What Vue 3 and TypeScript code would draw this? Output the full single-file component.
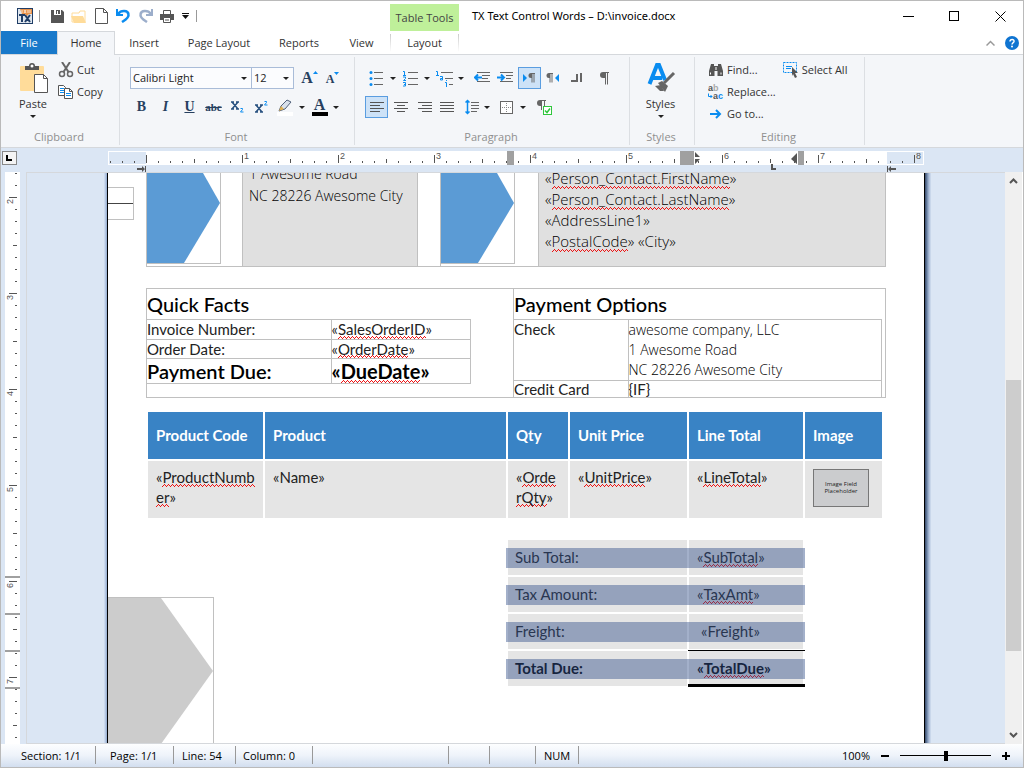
<script setup lang="ts">
import { ref } from 'vue'

interface Tick {
  pos: number
  kind: 'inch' | 'half' | 'eighth'
  label: string
}

const STEP = 12

function makeTicks(origin: number, from: number, to: number): Tick[] {
  const ticks: Tick[] = []
  for (let i = from; i <= to; i++) {
    const inch = i % 8 === 0
    ticks.push({
      pos: origin + i * STEP,
      kind: inch ? 'inch' : i % 4 === 0 ? 'half' : 'eighth',
      label: inch && i > 0 ? String(i / 8) : '',
    })
  }
  return ticks
}

const hTicks = makeTicks(38, -3, 64)
const vTicks = makeTicks(-167, 14, 61)
const rowMarks = [404, 441, 478, 515]

const tabs = [
  { name: 'File', cls: 'file' },
  { name: 'Home', cls: 'home' },
  { name: 'Insert', cls: 'insert' },
  { name: 'Page Layout', cls: 'pagelayout' },
  { name: 'Reports', cls: 'reports' },
  { name: 'View', cls: 'view' },
  { name: 'Layout', cls: 'layout' },
]

const columns = ['Product Code', 'Product', 'Qty', 'Unit Price', 'Line Total', 'Image']

const totals = [
  { label: 'Sub Total:', field: 'SubTotal', checked: true },
  { label: 'Tax Amount:', field: 'TaxAmt', checked: true },
  { label: 'Freight:', field: 'Freight', checked: false },
  { label: 'Total Due:', field: 'TotalDue', checked: true },
]

const font = ref('Calibri Light')
const size = ref('12')
const zoom = ref(100)
</script>

<template>
  <div class="window">
    <header class="titlebar">
      <div class="qat">
        <svg class="logo" width="16" height="16" viewBox="0 0 16 16">
          <rect width="16" height="16" fill="#1f3d66" />
          <rect x="1" y="1" width="14" height="14" fill="#dfe6ee" />
          <path d="M3 1h12v5h-3l-2 2-2-2H5z" fill="#e8924a" />
          <path d="M5 2v3M7 2l2 3M9 2l-2 3M11 2v3M13 2v3" stroke="#fbe3cc" />
          <path d="M2 7h6M5 7v7M8 7l5 7M13 7l-5 7" stroke="#1f3d66" stroke-width="2" fill="none" />
        </svg>
        <i class="bar"></i>
        <button class="q" aria-label="Save">
          <svg width="13" height="13" viewBox="0 0 13 13"><path d="M0 0h3v5h7V0h1l2 2v11H0z" fill="#555" /><path d="M5 0h4v4H7V1H6v3H5z" fill="#555" /></svg>
        </button>
        <button class="q" aria-label="Open">
          <svg width="16" height="13" viewBox="0 0 16 13"><path d="M1 12V3h7l1-2h5v11z" fill="#fff" stroke="#ffdc9a" /><path d="M0 6h12l3 7H3z" fill="#ffdc9a" /></svg>
        </button>
        <button class="q" aria-label="New">
          <svg width="13" height="16" viewBox="0 0 13 16"><path d="M.5.5h8l4 4v11H.5z" fill="#fff" stroke="#555" /><path d="M8.500.5v4h4" fill="none" stroke="#555" /></svg>
        </button>
        <button class="q" aria-label="Undo">
          <svg width="15" height="14" viewBox="0 0 15 14"><path d="M1 0v6h6" fill="none" stroke="#0a8cf0" stroke-width="2" /><path d="M2 5C5 1 12 1 12.500 5.500C13 9 9 11 6 13" fill="none" stroke="#0a8cf0" stroke-width="2.500" /></svg>
        </button>
        <button class="q" aria-label="Redo">
          <svg width="15" height="14" viewBox="0 0 15 14"><path d="M14 0v6H8" fill="none" stroke="#9caecb" stroke-width="2" /><path d="M13 5C10 1 3 1 2.500 5.500C2 9 6 11 9 13" fill="none" stroke="#9caecb" stroke-width="2.500" /></svg>
        </button>
        <button class="q" aria-label="Print">
          <svg width="14" height="13" viewBox="0 0 14 13"><path d="M3.500 4V.5h7V4" fill="#fff" stroke="#555" /><path d="M0 4h14v6H0z" fill="#555" /><path d="M3.500 7.500h7v5h-7z" fill="#fff" stroke="#555" /><path d="M5 10h4" stroke="#555" /></svg>
        </button>
        <button class="q small" aria-label="Customize">
          <svg width="7" height="6" viewBox="0 0 7 6"><path d="M0 0h7v1H0zM0 2h7L3.500 6z" fill="#111" /></svg>
        </button>
        <i class="bar"></i>
      </div>
      <div class="context">Table Tools</div>
      <h1 class="title">TX Text Control Words – D:\invoice.docx</h1>
      <div class="winbtns">
        <button aria-label="Minimize"><svg width="11" height="11"><path d="M0 5.500h11" stroke="#000" /></svg></button>
        <button aria-label="Maximize"><svg width="11" height="11"><rect x=".5" y=".5" width="9" height="9" fill="none" stroke="#000" /></svg></button>
        <button aria-label="Close"><svg width="11" height="11"><path d="M.5.5l10 10M10.500.5l-10 10" stroke="#000" /></svg></button>
      </div>
    </header>

    <nav class="tabs">
      <button v-for="t in tabs" :key="t.name" class="tab" :class="t.cls">{{ t.name }}</button>
      <span class="tabfill"></span>
      <button class="mini" aria-label="Collapse ribbon"><svg width="9" height="6"><path d="M.5 5.500l4-4 4 4" fill="none" stroke="#999" stroke-width="1.500" /></svg></button>
      <button class="mini" aria-label="Help">
        <svg width="14" height="14" viewBox="0 0 14 14"><circle cx="7" cy="7" r="7" fill="#0f74d1" /><path d="M5 5.500c0-3 4.500-2.500 4 0C8.700 6.700 7 7 7 8.500" fill="none" stroke="#fff" stroke-width="1.500" /><circle cx="7" cy="10.500" r="1" fill="#fff" /></svg>
      </button>
    </nav>

    <section class="ribbon">
      <div class="group clipboard">
        <div class="body">
          <button class="big">
            <svg width="30" height="32" viewBox="0 0 30 32">
              <rect x="2" y="4" width="24" height="25" rx="1" fill="#ffdc9a" />
              <path d="M7 8V4h4a3 3 0 0 1 6 0h4v4z" fill="#555" /><circle cx="14" cy="4" r="1.500" fill="#fff" />
              <path d="M16.500 12.500h9l4 4v14h-13z" fill="#fff" stroke="#555" /><path d="M25.500 12.500v4h4" fill="none" stroke="#555" />
            </svg>
            <span>Paste</span>
            <i class="caret"></i>
          </button>
          <div class="stack">
            <button class="item">
              <svg width="16" height="16" viewBox="0 0 16 16"><path d="M4 0l6.500 10M12 0L5.500 10" stroke="#666" stroke-width="2" /><circle cx="4" cy="12" r="2.500" fill="none" stroke="#666" stroke-width="1.500" /><circle cx="12" cy="12" r="2.500" fill="none" stroke="#666" stroke-width="1.500" /></svg>
              Cut
            </button>
            <button class="item">
              <svg width="16" height="16" viewBox="0 0 16 16"><path d="M.5 1.500h5l2 2v8h-7z" fill="#fff" stroke="#555" /><path d="M2 4.500h4M2 6.500h4M2 8.500h4" stroke="#0a8cf0" /><path d="M6.500 4.500h5l3 3v7h-8z" fill="#fff" stroke="#555" /><path d="M11.500 4.500v3h3" fill="none" stroke="#555" /><path d="M8 9.500h5M8 11.500h5" stroke="#0a8cf0" /></svg>
              Copy
            </button>
          </div>
        </div>
        <div class="caption">Clipboard</div>
      </div>

      <div class="group fontgroup">
        <div class="body rows">
          <div class="row">
            <label class="combo family"><select v-model="font" aria-label="Font"><option>Calibri Light</option></select><i class="caret"></i></label>
            <label class="combo size"><select v-model="size" aria-label="Font size"><option>12</option></select><i class="caret"></i></label>
            <button class="tool after" aria-label="Grow font"><span class="glyph a1">A</span><svg width="5" height="14"><path d="M0 3h5L2.500 0z" fill="#0a8cf0" /></svg></button>
            <button class="tool" aria-label="Shrink font"><span class="glyph a2">A</span><svg width="5" height="14"><path d="M0 1h5L2.500 4z" fill="#0a8cf0" /></svg></button>
          </div>
          <div class="row gap">
            <button class="tool glyph b">B</button>
            <button class="tool glyph i">I</button>
            <button class="tool glyph u">U</button>
            <button class="tool glyph s">abc</button>
            <button class="tool" aria-label="Subscript"><svg width="14" height="14" viewBox="0 0 14 14"><path d="M1 2l6 7M7 2L1 9M0 2h3M5 2h3M0 9h3M5 9h3" fill="none" stroke="#27507f" stroke-width="1.500" /><path d="M9.500 8.500h2v1l-2 2.500h3" fill="none" stroke="#0a8cf0" /></svg></button>
            <button class="tool" aria-label="Superscript"><svg width="14" height="14" viewBox="0 0 14 14"><path d="M1 5l6 7M7 5L1 12M0 5h3M5 5h3M0 12h3M5 12h3" fill="none" stroke="#27507f" stroke-width="1.500" /><path d="M9.500 1.500h2v1l-2 2.500h3" fill="none" stroke="#0a8cf0" /></svg></button>
            <span class="split">
              <button class="tool" aria-label="Highlight"><svg width="17" height="17" viewBox="0 0 17 17"><path d="M0 13h16v4H0z" fill="#fff" /><path d="M2 12l2-5 6-6 4 2-6 7z" fill="#d8e0ea" stroke="#50607a" /><path d="M2 12l2-5 3 3z" fill="#e0b050" /></svg></button>
              <button class="drop" aria-label="Highlight colors"><i class="caret"></i></button>
            </span>
            <span class="split">
              <button class="tool stacked" aria-label="Font color"><span class="glyph ac">A</span><i class="inkbar"></i></button>
              <button class="drop" aria-label="Font colors"><i class="caret"></i></button>
            </span>
          </div>
        </div>
        <div class="caption">Font</div>
      </div>

      <div class="group paragraph">
        <div class="body rows">
          <div class="row gap">
            <span class="split">
              <button class="tool" aria-label="Bullets"><svg width="15" height="16" viewBox="0 0 15 16"><path d="M5 2.500h9M5 8.500h9M5 14.500h9" stroke="#666" /><g fill="#0a8cf0"><circle cx="2" cy="2.500" r="1.500" /><circle cx="2" cy="8.500" r="1.500" /><circle cx="2" cy="14.500" r="1.500" /></g></svg></button>
              <button class="drop" aria-label="Bullet styles"><i class="caret"></i></button>
            </span>
            <span class="split">
              <button class="tool" aria-label="Numbering"><svg width="15" height="17" viewBox="0 0 15 17"><path d="M5 2.500h10M5 8.500h10M5 14.500h10" stroke="#666" /><path d="M0 1.500h1.500V5M0 5.500h3M0 7h2.500v1.500L.5 10.500H3M0 12.500h2.500v3.500H0M1 14.500h1" fill="none" stroke="#0a8cf0" /></svg></button>
              <button class="drop" aria-label="Number styles"><i class="caret"></i></button>
            </span>
            <span class="split">
              <button class="tool" aria-label="Multilevel list"><svg width="17" height="17" viewBox="0 0 17 17"><path d="M5 2.500h12M9 8.500h8M13 14.500h4" stroke="#666" /><path d="M0 1.500h1.500V5M0 5.500h3M4 6.500h2.500V10H4.500V8.500H6M9 12.500h1.500V17M10 10.500h1" fill="none" stroke="#0a8cf0" /></svg></button>
              <button class="drop" aria-label="Multilevel styles"><i class="caret"></i></button>
            </span>
            <button class="tool space" aria-label="Decrease indent"><svg width="17" height="12" viewBox="0 0 17 12"><path d="M3 .5h13M8 3.500h8M8 6.500h6M3 9.500h13" stroke="#666" /><path d="M1 5.500h7M4 2.500l-3 3 3 3" fill="none" stroke="#0a8cf0" stroke-width="2" /></svg></button>
            <button class="tool slim" aria-label="Increase indent"><svg width="17" height="12" viewBox="0 0 17 12"><path d="M3 .5h13M9 3.500h7M9 6.500h5M3 9.500h13" stroke="#666" /><path d="M0 5.500h7M4 2.500l3 3-3 3" fill="none" stroke="#0a8cf0" stroke-width="2" /></svg></button>
            <button class="tool on near" aria-label="Left to right"><svg width="13" height="10" viewBox="0 0 13 10"><path d="M0 1v8l4-4z" fill="#0a8cf0" /><path d="M12 .5H8M9 1v8.500M11 1v8.500" fill="none" stroke="#666" /><path d="M9 0H8a2 2 0 0 0 0 5h1z" fill="#666" /></svg></button>
            <button class="tool slim" aria-label="Right to left"><svg width="13" height="10" viewBox="0 0 13 10"><path d="M13 1v8L9 5z" fill="#0a8cf0" /><path d="M7 .5H3M4 1v8.500M6 1v8.500" fill="none" stroke="#666" /><path d="M4 0H3a2 2 0 0 0 0 5h1z" fill="#666" /></svg></button>
            <button class="tool near" aria-label="Tabs"><svg width="12" height="10" viewBox="0 0 12 10"><path d="M0 8h7M6 1v8M10 0v9" fill="none" stroke="#666" stroke-width="2" /></svg></button>
            <button class="tool space" aria-label="Show marks"><svg width="11" height="13" viewBox="0 0 11 13"><path d="M10 .5H4M6.500 0v12.500M8.500 0v12.500" fill="none" stroke="#666" /><path d="M6 0H4a3 3 0 0 0 0 6h2z" fill="#666" /></svg></button>
          </div>
          <div class="row gap">
            <button class="tool on" aria-label="Align left"><svg width="14" height="12"><path d="M0 1.500h14M0 4.500h10M0 7.500h14M0 10.500h10" stroke="#555" /></svg></button>
            <button class="tool" aria-label="Center"><svg width="14" height="12"><path d="M0 1.500h14M3 4.500h8M0 7.500h14M3 10.500h8" stroke="#555" /></svg></button>
            <button class="tool" aria-label="Align right"><svg width="14" height="12"><path d="M0 1.500h14M4 4.500h10M0 7.500h14M4 10.500h10" stroke="#555" /></svg></button>
            <button class="tool slim" aria-label="Justify"><svg width="14" height="12"><path d="M0 1.500h14M0 4.500h14M0 7.500h14M0 10.500h14" stroke="#555" /></svg></button>
            <span class="split narrow space">
              <button class="tool" aria-label="Line spacing"><svg width="15" height="16" viewBox="0 0 15 16"><path d="M6 3.500h8M6 6.500h8M6 9.500h8M6 12.500h6" stroke="#666" /><path d="M2.500 1v14M.5 3.500l2-2 2 2M.5 12.500l2 2 2-2" fill="none" stroke="#0a8cf0" stroke-width="1.500" /></svg></button>
              <button class="drop" aria-label="Line spacing options"><i class="caret"></i></button>
            </span>
            <span class="split near">
              <button class="tool" aria-label="Borders"><svg width="13" height="13" viewBox="0 0 13 13"><rect x=".5" y=".5" width="12" height="12" fill="#fff" stroke="#666" /><path d="M6.500 2v10M2 6.500h10" stroke="#888" stroke-dasharray="1 1" /></svg></button>
              <button class="drop" aria-label="Border styles"><i class="caret"></i></button>
            </span>
            <button class="tool space" aria-label="Paragraph settings"><svg width="15" height="15" viewBox="0 0 15 15"><path d="M9 .5H3M4.500 0v10M7.500 0v10" fill="none" stroke="#666" /><path d="M5 0H3a2.500 2.500 0 0 0 0 6h2z" fill="#666" /><rect x="6.500" y="6.500" width="8" height="8" fill="#fff" stroke="#2fc63d" /><path d="M8 10.500l2 2 3-4" fill="none" stroke="#2fc63d" stroke-width="1.500" /></svg></button>
          </div>
        </div>
        <div class="caption">Paragraph</div>
      </div>

      <div class="group styles">
        <div class="body">
          <button class="big">
            <svg width="30" height="32" viewBox="0 0 30 32">
              <path d="M3.500 22L11 3h2l6 15M7 16h9" fill="none" stroke="#0a8cf0" stroke-width="4" />
              <path d="M28 11L18 21" stroke="#666" stroke-width="3" /><path d="M12 21l4-2 6 5-3 6z" fill="#666" /><path d="M9 24l6-1 3 6h-4z" fill="#666" />
            </svg>
            <span>Styles</span>
            <i class="caret"></i>
          </button>
        </div>
        <div class="caption">Styles</div>
      </div>

      <div class="group editing">
        <div class="body">
          <div class="stack">
            <button class="item">
              <svg width="16" height="16" viewBox="0 0 16 16"><path d="M3 2h3v2h4V2h3l2 7v5H9.500V9h-3v5H1V9z" fill="#555" /><path d="M2.500 10.500v2M13 10.500v2M8 5v3" stroke="#fff" /></svg>
              Find...
            </button>
            <button class="item">
              <svg class="abac" width="16" height="18" viewBox="0 0 16 18"><text x="0" y="8">a<tspan class="faint">b</tspan></text><text x="5" y="16">a<tspan class="blue">c</tspan></text><path d="M.5 10.500v3H4M2.500 12l1.500 1.500L2.500 15" fill="none" stroke="#0a8cf0" /></svg>
              Replace...
            </button>
            <button class="item">
              <svg width="16" height="16" viewBox="0 0 16 16"><path d="M2 8h10M8 4l4 4-4 4" fill="none" stroke="#0a8cf0" stroke-width="2" /></svg>
              Go to...
            </button>
          </div>
          <div class="stack">
            <button class="item">
              <svg width="16" height="16" viewBox="0 0 16 16"><rect x=".5" y=".5" width="13" height="10" fill="none" stroke="#0a8cf0" stroke-dasharray="2 1" /><path d="M3 4.500h6M3 6.500h5" stroke="#0a8cf0" /><path d="M9 5l6 6h-3l2 4-2 1-2-4-1 2z" fill="#555" /></svg>
              Select All
            </button>
          </div>
        </div>
        <div class="caption">Editing</div>
      </div>
    </section>

    <div class="rulerrow">
      <button class="corner" aria-label="Tab type"><svg width="7" height="7"><path d="M1 0v6M0 5h6" stroke="#000" stroke-width="2" /></svg></button>
      <div class="hruler">
        <svg width="816" height="24">
          <rect y="3" width="816" height="14" fill="#fff" />
          <rect x="1" y="4" width="37" height="12" fill="#dbe6f4" />
          <rect x="779" y="4" width="36" height="12" fill="#dbe6f4" />
          <g v-for="t in hTicks" :key="t.pos">
            <rect :x="t.pos" :y="t.kind === 'inch' ? 7 : t.kind === 'half' ? 11 : 13" width="1" :height="t.kind === 'inch' ? 8 : t.kind === 'half' ? 4 : 2" fill="#555" />
            <text v-if="t.label" :x="t.pos + 2" y="11" class="num">{{ t.label }}</text>
          </g>
          <g fill="#a0a0a0"><rect x="399" y="3" width="7" height="14" /><rect x="572" y="3" width="14" height="14" /><rect x="690" y="3" width="6" height="14" /></g>
          <g fill="#555"><path d="M587 4l5 5h-5zM587 16l5-5h-5z" /><path d="M689 5v11l-6-5z" /><path d="M663 16h2v4h3v2h-5zM29 20h5v-2l3 3-3 3v-2h-5zM37 18h1v6h-1zM788 20h-5v-2l-3 3 3 3v-2h5zM779 18h1v6h-1z" /></g>
        </svg>
      </div>
    </div>

    <main class="workspace">
      <div class="vruler">
        <svg width="15" height="100%">
          <g v-for="t in vTicks" :key="t.pos">
            <rect :x="t.kind === 'inch' ? 4 : t.kind === 'half' ? 8 : 10" :y="t.pos" :width="t.kind === 'inch' ? 8 : t.kind === 'half' ? 4 : 2" height="1" fill="#555" />
            <text v-if="t.label" :transform="`translate(8 ${t.pos + 7}) rotate(-90)`" class="num">{{ t.label }}</text>
          </g>
          <rect v-for="m in rowMarks" :key="m" :y="m" width="15" height="2" fill="#a0a0a0" />
        </svg>
      </div>

      <div class="viewport">
        <article class="page">
          <div class="marginbox"></div>

          <section class="addresses">
            <div class="pic"><svg width="73" height="90" viewBox="0 0 73 90"><path d="M0 0h56l17 30-36 60H0z" fill="#5b9bd5" /></svg></div>
            <address class="addr from"><div>1 Awesome Road<br />NC 28226 Awesome City</div></address>
            <div class="between"></div>
            <div class="pic"><svg width="73" height="90" viewBox="0 0 73 90"><path d="M0 0h56l17 30-36 60H0z" fill="#5b9bd5" /></svg></div>
            <address class="addr to">
              <div>«<u>Person_Contact.FirstName</u>»<br />«<u>Person_Contact.LastName</u>»<br />«AddressLine1»<br />«<u>PostalCode</u>» «City»</div>
            </address>
          </section>

          <section class="facts">
            <div class="quick">
              <h2>Quick Facts</h2>
              <table>
                <tbody>
                  <tr><td>Invoice Number:</td><td>«<u>SalesOrderID</u>»</td></tr>
                  <tr class="short"><td>Order Date:</td><td>«<u>OrderDate</u>»</td></tr>
                  <tr class="due"><td>Payment Due:</td><td>«<u>DueDate</u>»</td></tr>
                </tbody>
              </table>
            </div>
            <div class="payment">
              <h2>Payment Options</h2>
              <table>
                <tbody>
                  <tr><td>Check</td><td class="seg">awesome company, LLC<br />1 Awesome Road<br />NC 28226 Awesome City</td></tr>
                  <tr class="last"><td>Credit Card</td><td>{IF}</td></tr>
                </tbody>
              </table>
            </div>
          </section>

          <table class="products">
            <colgroup><col class="c1" /><col class="c2" /><col class="c3" /><col class="c4" /><col class="c5" /><col class="c6" /></colgroup>
            <thead>
              <tr><th v-for="c in columns" :key="c">{{ c }}</th></tr>
            </thead>
            <tbody>
              <tr>
                <td>«<u>ProductNumb</u><br /><u>er</u>»</td>
                <td>«Name»</td>
                <td>«<u>Orde</u><br /><u>rQty</u>»</td>
                <td>«<u>UnitPrice</u>»</td>
                <td>«<u>LineTotal</u>»</td>
                <td><div class="placeholder">Image Field<br />Placeholder</div></td>
              </tr>
            </tbody>
          </table>

          <section class="bottom">
            <div class="grayarrow"><svg width="105" height="146" viewBox="0 0 105 146"><path d="M0 0h53l52 73-52 73H0z" fill="#ccc" /></svg></div>
            <table class="totals">
              <tbody>
                <tr v-for="t in totals" :key="t.field" :class="{ grand: t.field === 'TotalDue', plain: !t.checked }">
                  <td>{{ t.label }}</td>
                  <td>«<u v-if="t.checked">{{ t.field }}</u><template v-else>{{ t.field }}</template>»</td>
                </tr>
              </tbody>
            </table>
          </section>
        </article>
      </div>

      <div class="scroll">
        <button aria-label="Scroll up"><svg width="9" height="6"><path d="M1 5l3.500-3.500L8 5" fill="none" stroke="#555" stroke-width="2" /></svg></button>
        <div class="track"><div class="thumb"></div></div>
        <button aria-label="Scroll down"><svg width="9" height="6"><path d="M1 1l3.500 3.500L8 1" fill="none" stroke="#555" stroke-width="2" /></svg></button>
      </div>
    </main>

    <footer class="status">
      <span class="s1">Section: 1/1</span>
      <span class="s2">Page: 1/1</span>
      <span class="s3">Line: 54</span>
      <span class="s4">Column: 0</span>
      <span class="s5"></span>
      <span class="s6"></span>
      <span class="s7"></span>
      <span class="s8">NUM</span>
      <div class="zoomer">
        <output>{{ zoom }}%</output>
        <button aria-label="Zoom out"><svg width="8" height="8"><path d="M0 4h8" stroke="#000" stroke-width="2" /></svg></button>
        <input v-model="zoom" type="range" min="0" max="200" aria-label="Zoom" />
        <button aria-label="Zoom in"><svg width="8" height="8"><path d="M0 4h8M4 0v8" stroke="#000" stroke-width="2" /></svg></button>
      </div>
    </footer>
  </div>
</template>

<style>
body {
  margin: 0;
}
</style>

<style scoped>
* {
  box-sizing: border-box;
}
.window {
  display: flex;
  flex-direction: column;
  height: 100vh;
  min-height: 600px;
  overflow: hidden;
  border: 1px solid #bababa;
  background: #fff;
  color: #333;
  font: 11px/16px "Open Sans", "Noto Sans", sans-serif;
}
button {
  padding: 0;
  border: 0;
  background: none;
  color: inherit;
  font: inherit;
}
svg {
  display: block;
}

/* title bar */
.titlebar {
  display: flex;
  height: 30px;
}
.qat {
  display: flex;
  align-items: center;
  width: 389px;
  padding-left: 16px;
}
.bar {
  width: 1px;
  height: 12px;
  margin: 0 6px;
  background: #999;
}
.q {
  display: flex;
  justify-content: center;
  width: 22px;
}
.q.small {
  width: 14px;
}
.q.small + .bar {
  margin-left: 4px;
}
.context {
  width: 69px;
  margin-top: 3px;
  background: #bff09a;
  color: #444;
  line-height: 28px;
  text-align: center;
}
.title {
  flex: 1;
  margin: 0 0 0 13px;
  color: #000;
  font: 400 12px/30px "Noto Sans", "Open Sans", sans-serif;
  font-size: 11px;
}
.winbtns {
  display: flex;
}
.winbtns button {
  display: flex;
  align-items: center;
  justify-content: center;
  width: 46px;
}

/* tabs */
.tabs {
  display: flex;
  height: 24px;
  line-height: 23px;
}
.tab,
.tabfill {
  border-bottom: 1px solid #d5d8dc;
}
.file {
  width: 56px;
  background: #1979ca;
  color: #fff;
}
.home {
  width: 58px;
  padding-bottom: 2px;
  border: 1px solid #d5d8dc;
  border-bottom: 0;
  background: #f4f6f9;
  line-height: 21px;
}
.insert {
  width: 58px;
}
.pagelayout {
  width: 92px;
}
.reports {
  width: 68px;
}
.view {
  width: 57px;
}
.layout {
  width: 69px;
  background: linear-gradient(#ccc, #fff) left / 1px 18px no-repeat, linear-gradient(#ccc, #fff) right / 1px 18px no-repeat;
}
.tabfill {
  flex: 1;
}
.mini {
  display: flex;
  align-items: center;
  justify-content: center;
  width: 22px;
  border-bottom: 1px solid #d5d8dc;
}

/* ribbon */
.ribbon {
  display: flex;
  height: 93px;
  border-bottom: 1px solid #d5d8dc;
  background: #f4f6f9;
}
.group {
  display: flex;
  flex-direction: column;
  height: 88px;
  margin-top: 2px;
  border-right: 1px solid #dcdfe3;
}
.clipboard {
  width: 119px;
}
.fontgroup {
  width: 235px;
}
.paragraph {
  width: 275px;
}
.styles {
  width: 65px;
}
.editing {
  width: 170px;
}
.body {
  display: flex;
  flex: 1;
}
.caption {
  height: 16px;
  padding-right: 2px;
  color: #8f8f8f;
  text-align: center;
}
.big {
  display: flex;
  flex-direction: column;
  align-items: center;
  width: 61px;
  height: 66px;
  padding-top: 5px;
}
.big span {
  height: 21px;
  line-height: 20px;
}
.clipboard .big {
  width: 56px;
  margin-left: 4px;
}
.clipboard .stack {
  margin-left: -3px;
}
.editing .body {
  padding-left: 13px;
}
.editing .stack + .stack {
  margin-left: 7px;
}
.stack {
  padding-top: 2px;
}
.item {
  display: flex;
  align-items: center;
  gap: 3px;
  height: 22px;
  white-space: nowrap;
}
.abac {
  fill: #555;
  font: 700 9px "Liberation Sans", sans-serif;
}
.faint {
  fill: #aaa;
}
.blue {
  fill: #0a8cf0;
}
.caret {
  width: 0;
  height: 0;
  border: 3px solid transparent;
  border-top-color: #222;
  border-bottom: 0;
}
.rows {
  flex-direction: column;
  gap: 7px;
  padding: 10px 0 0 10px;
}
.row {
  display: flex;
  height: 22px;
}
.row.gap {
  gap: 1px;
}
.combo {
  display: flex;
  position: relative;
  align-items: center;
  height: 22px;
  border: 1px solid #a9bcd8;
  background: #fbfcfe;
}
.combo select {
  width: 100%;
  height: 20px;
  padding: 0 2px;
  border: 0;
  appearance: none;
  background: none;
  color: #222;
  font: inherit;
}
.combo .caret {
  position: absolute;
  right: 4px;
  pointer-events: none;
}
.family {
  width: 122px;
}
.size {
  width: 43px;
  margin-left: -1px;
}
.tool {
  display: flex;
  align-items: center;
  justify-content: center;
  width: 23px;
  height: 22px;
}
.tool.after {
  margin-left: 4px;
}
.near {
  margin-left: 2px;
}
.tool.slim {
  width: 20px;
}
.space {
  margin-left: 4px;
}
.tool.on {
  border: 1px solid #5a9de0;
  background: #cde2f7;
}
.split {
  display: flex;
}
.drop {
  display: flex;
  align-items: center;
  justify-content: center;
  width: 10px;
}
.narrow .tool {
  width: 20px;
}
.stacked {
  flex-direction: column;
}
.inkbar {
  width: 16px;
  height: 4px;
  background: #000;
}
.glyph {
  color: #27405f;
  font-family: "Liberation Serif", serif;
  font-weight: 700;
}
.a1 {
  font-size: 16px;
}
.a2 {
  padding-top: 2px;
  font-size: 12px;
}
.ac {
  height: 14px;
  font-size: 16px;
  line-height: 14px;
}
.b,
.i,
.u {
  font-size: 14px;
}
.i {
  font-style: italic;
}
.u {
  text-decoration: underline;
}
.s {
  font-size: 11px;
  text-decoration: line-through;
}

/* rulers */
.rulerrow {
  display: grid;
  grid-template-columns: 26px minmax(0, 1fr) 18px;
  height: 24px;
  background: #dbe6f4;
}
.corner {
  display: flex;
  align-items: center;
  justify-content: center;
  width: 15px;
  height: 14px;
  margin: 3px 0 0 1px;
  border: 1px solid #888;
  background: #f4f4f4;
}
.hruler {
  display: flex;
  justify-content: center;
  overflow: hidden;
}
.hruler svg {
  flex: none;
}
.num {
  fill: #555;
  font: 9px "Liberation Sans", sans-serif;
}
.workspace {
  display: grid;
  flex: 1;
  grid-template-columns: 25px minmax(0, 1fr) 18px;
  min-height: 0;
  background: #dbe6f4;
}
.vruler {
  width: 15px;
  margin-left: 4px;
  overflow: hidden;
  background: #fff;
}
.viewport {
  display: flex;
  justify-content: center;
  overflow: hidden;
  border: 1px solid #d5d8dc;
  border-right: 0;
}

/* document */
.page {
  position: relative;
  flex: none;
  width: 816px;
  background: #fff;
  box-shadow: -1px 0 #000, 1px 0 #000, 2px 0 #45597a, 3px 0 #5f7596, 4px 0 #7e93b3, 5px 0 #9cafcc, 6px 0 #b5c5de, 7px 0 #c9d7ea, -2px 0 #9db3d4, -3px 0 #b5c7e2, -4px 0 #cbd9ed;
  color: #222;
  font: 15px/20px Lato, "Open Sans", sans-serif;
}
u {
  display: inline-block;
  background: url("data:image/svg+xml,%3Csvg xmlns='http://www.w3.org/2000/svg' width='4' height='3'%3E%3Cpath d='M0 2h1v1H0zM1 1h1v1H1zM2 0h1v1H2zM3 1h1v1H3z' fill='%23ee1111'/%3E%3C/svg%3E") left bottom / 4px 3px repeat-x;
  text-decoration: none;
}
.marginbox {
  position: absolute;
  top: 14px;
  left: 0;
  width: 26px;
  height: 33px;
  border: 1px solid #c0c0c0;
  border-left: 0;
  background: linear-gradient(#444, #444) 0 15px / 100% 1px no-repeat;
}
.addresses {
  display: grid;
  grid-template-columns: 95px 175px 24px 97px minmax(0, 1fr);
  align-items: end;
  width: 740px;
  height: 94px;
  margin-left: 38px;
  overflow: hidden;
  border: solid #c0c0c0;
  border-width: 0 1px 1px;
}
.pic {
  width: 74px;
  margin-bottom: 2px;
  border: solid #c0c0c0;
  border-width: 0 1px 1px 0;
}
.between {
  height: 93px;
  border: solid #c0c0c0;
  border-width: 0 1px;
}
.addr {
  display: flex;
  align-items: flex-end;
  height: 93px;
  padding: 0 0 14px 6px;
  border-left: 1px solid #c0c0c0;
  background: #e0e0e0;
  color: #000;
  font: 300 15px/21px "Open Sans", sans-serif;
}
.from {
  padding-bottom: 59px;
  font-size: 14px;
  line-height: 22px;
}
.facts {
  display: flex;
  width: 740px;
  height: 110px;
  margin: 21px 0 0 38px;
  overflow: hidden;
  border: 1px solid #c0c0c0;
}
.quick {
  width: 366px;
}
.payment {
  flex: 1;
  border-left: 1px solid #c0c0c0;
}
h2 {
  height: 30px;
  margin: 0;
  color: #000;
  font: 500 20px/30px Lato, "Open Sans", sans-serif;
}
.facts table {
  border-collapse: collapse;
  table-layout: fixed;
}
.facts td {
  padding: 0;
  border: 1px solid #c0c0c0;
  line-height: 19px;
  vertical-align: top;
}
.quick td:first-child,
.payment td:first-child {
  border-left: 0;
}
.quick table {
  width: 324px;
}
.quick td:first-child {
  width: 184px;
}
.facts .short td {
  line-height: 18px;
}
.facts .due td {
  color: #000;
  font-size: 20px;
  font-weight: 700;
  line-height: 24px;
}
.facts .due td:first-child {
  font-weight: 600;
}
.payment table {
  width: 368px;
}
.payment td:first-child {
  width: 114px;
}
.facts .seg {
  color: #000;
  font: 300 14px/20px "Open Sans", sans-serif;
}
.facts .last td {
  border-bottom: 0;
  line-height: 17px;
}
.products {
  width: 738px;
  margin: 12px 0 0 38px;
  border-spacing: 2px;
  table-layout: fixed;
}
.c1 {
  width: 115px;
}
.c2 {
  width: 241px;
}
.c3 {
  width: 60px;
}
.c4 {
  width: 117px;
}
.c5 {
  width: 114px;
}
.c6 {
  width: 77px;
}
.products th {
  height: 47px;
  padding: 0 8px 2px;
  background: #3983c5;
  color: #fff;
  font-weight: 700;
  text-align: left;
}
.products td {
  height: 57px;
  padding: 6px 0 0 8px;
  background: #e5e5e5;
  vertical-align: top;
}
.placeholder {
  width: 56px;
  height: 38px;
  padding-top: 11px;
  margin-top: 2px;
  border: 1px solid #777;
  background: #cbccce;
  color: #222;
  font: 6px/7px "Open Sans", sans-serif;
  text-align: center;
}
.bottom {
  display: flex;
  align-items: flex-start;
  margin-top: 18px;
}
.grayarrow {
  width: 106px;
  margin-top: 59px;
  border: solid #c0c0c0;
  border-width: 1px 1px 0 0;
}
.totals {
  width: 299px;
  margin-left: 292px;
  border-spacing: 2px;
  table-layout: fixed;
}
.totals td {
  position: relative;
  height: 35px;
  padding: 0 0 2px 7px;
  background: #e5e5e5;
}
.totals td:last-child {
  padding-left: 8px;
}
.totals td:first-child {
  width: 179px;
}
.totals td::after {
  position: absolute;
  inset: 8px -2px 7px 0;
  background: rgba(51, 80, 138, 0.45);
  content: "";
}
.totals td:first-child::after {
  left: -2px;
}
.totals .plain td:last-child {
  padding-left: 12px;
}
.totals .grand td {
  color: #000;
  font-weight: 700;
}
.totals .grand td:last-child::before {
  position: absolute;
  inset: -1px -2px -1px -1px;
  border: solid #000;
  border-width: 1px 0 3px;
  content: "";
}

/* scroll bar */
.scroll {
  display: flex;
  flex-direction: column;
  border: solid #fff;
  border-width: 0 1px 0 0;
  background: #f0f0f0;
}
.scroll button {
  display: flex;
  align-items: center;
  justify-content: center;
  height: 18px;
}
.track {
  display: grid;
  flex: 1;
  grid-template-rows: 190fr 271fr 75fr;
}
.thumb {
  grid-row: 2;
  margin: 0 1px;
  background: #cdcdcd;
}

/* status bar */
.status {
  display: flex;
  height: 23px;
  background: linear-gradient(#fdfeff, #eef3fa 50%, #d2deef);
  color: #000;
  line-height: 22px;
}
.status > span {
  height: 18px;
  margin-top: 2px;
  border-right: 1px solid #999;
  line-height: 19px;
  white-space: nowrap;
}
.s1 {
  width: 95px;
  padding-left: 20px;
}
.s2 {
  width: 78px;
  padding-left: 14px;
}
.s3 {
  width: 62px;
  padding-left: 8px;
}
.s4 {
  width: 77px;
  padding-left: 7px;
}
.s5 {
  width: 136px;
}
.s6 {
  width: 41px;
}
.s7 {
  width: 46px;
}
.s8 {
  width: 43px;
  padding-left: 8px;
}
.zoomer {
  display: flex;
  align-items: center;
  gap: 11px;
  margin: 0 13px 0 auto;
}
.zoomer input {
  width: 91px;
  height: 12px;
  margin: 0;
  appearance: none;
  background: linear-gradient(#000, #000) center / 100% 1px no-repeat;
}
.zoomer input::-webkit-slider-thumb {
  width: 4px;
  height: 10px;
  appearance: none;
  background: #000;
}
</style>
